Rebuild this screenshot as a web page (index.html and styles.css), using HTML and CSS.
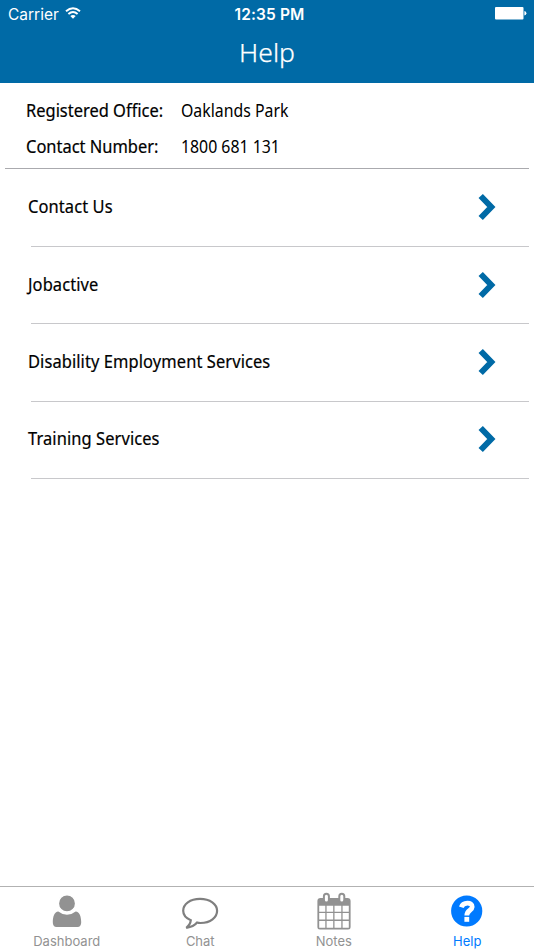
FILE: index.html
```html
<!DOCTYPE html>
<html lang="en">
  <head>
    <meta charset="utf-8" />
    <meta name="viewport" content="width=device-width, initial-scale=1.0" />
    <title>Help</title>
    <link rel="stylesheet" href="styles.css">
  </head>
  <body>
    <header class="header">
      <div class="status">
        <span class="status__carrier">
          <span class="status__name">Carrier</span>
          <svg class="status__wifi" viewBox="0 0 16 12">
            <path d="M1 4.2Q8-1.8 15 4.2M3.4 6.9Q8 3.1 12.6 6.9" />
            <path class="wifi__dot" d="M5.3 9Q8 6.9 10.7 9L8 11.7z" />
          </svg>
        </span>
        <span class="status__time">12:35 PM</span>
        <svg class="status__battery" viewBox="0 0 32 13">
          <rect width="28.5" height="12.4" rx="1" />
          <path d="M29.4 4Q31.4 4.4 31.4 6.2T29.4 8.4z" />
        </svg>
      </div>
      <h1>Help</h1>
    </header>
    <main>
      <dl class="info">
        <dt><span>Registered Office:</span></dt>
        <dd><span>Oaklands Park</span></dd>
        <dt><span>Contact Number:</span></dt>
        <dd><span>1800 681 131</span></dd>
      </dl>
      <ul class="menu">
        <li>
          <a href="#contact"><span>Contact Us</span>
            <svg viewBox="0 0 18 28"><path d="M2.7 3L13.3 14L2.7 25" /></svg>
          </a>
        </li>
        <li>
          <a href="#jobactive"><span>Jobactive</span>
            <svg viewBox="0 0 18 28"><path d="M2.7 3L13.3 14L2.7 25" /></svg>
          </a>
        </li>
        <li>
          <a href="#disability"><span>Disability Employment Services</span>
            <svg viewBox="0 0 18 28"><path d="M2.7 3L13.3 14L2.7 25" /></svg>
          </a>
        </li>
        <li>
          <a href="#training"><span>Training Services</span>
            <svg viewBox="0 0 18 28"><path d="M2.7 3L13.3 14L2.7 25" /></svg>
          </a>
        </li>
      </ul>
    </main>
    <nav class="tabs">
      <a href="#dashboard">
        <svg viewBox="0 0 40 40">
          <path class="fill" d="M11.3 20.5Q15.2 23.7 20 23.7T28.7 20.5C32.5 20.7 34.2 25.5 34.2 31.2Q34.2 36 30.5 36H9.5Q5.8 36 5.8 31.2C5.8 25.5 7.5 20.7 11.3 20.5z" />
          <circle class="fill head" cx="20" cy="12.4" r="8.6" />
        </svg>
        <span>Dashboard</span>
      </a>
      <a href="#chat">
        <svg viewBox="0 0 40 40">
          <path class="line" d="M20 7.9C10 7.9 3.2 13.3 3.2 19.8C3.2 24 6.1 27.3 10.8 29.2C10.5 32.3 9 34.7 6.3 36.8C11.3 36 14.7 34.4 17.1 31.5Q18.5 32 20.5 32C30.5 32 37.1 26.4 37.1 19.8C37.1 13.3 30 7.9 20 7.9z" />
        </svg>
        <span>Chat</span>
      </a>
      <a href="#notes">
        <svg viewBox="0 0 40 40">
          <path class="fill" fill-rule="evenodd" d="M6.5 7H33.5Q36.6 7 36.6 10V36Q36.6 38.5 34 38.5H6Q3.4 38.5 3.4 36V10Q3.4 7 6.5 7zM5.2 14.7V20.7H11.3V14.7zM12.6 14.7V20.7H19.2V14.7zM20.5 14.7V20.7H27.3V14.7zM28.6 14.7V20.7H34.8V14.7zM5.2 22V28.6H11.3V22zM12.6 22V28.6H19.2V22zM20.5 22V28.6H27.3V22zM28.6 22V28.6H34.8V22zM5.2 29.9V36.7H11.3V29.9zM12.6 29.9V36.7H19.2V29.9zM20.5 29.9V36.7H27.3V29.9zM28.6 29.9V36.7H34.8V29.9z" />
          <rect class="ring" x="9.9" y="2.8" width="5" height="8.8" rx="2.5" />
          <rect class="ring" x="25.3" y="2.8" width="5" height="8.8" rx="2.5" />
        </svg>
        <span>Notes</span>
      </a>
      <a class="tabs__active" href="#help">
        <svg viewBox="0 0 40 40">
          <circle class="fill" cx="19.7" cy="20" r="15.6" />
          <path class="mark" d="M14.3 16.3C16 11 25.3 10.8 25.2 15.9C25.1 19.4 19.8 19.3 19.8 24.4" />
          <path class="mark" d="M19.8 25.9V30.8" />
        </svg>
        <span>Help</span>
      </a>
    </nav>
  </body>
</html>
```

FILE: styles.css
```css
* {
  box-sizing: border-box;
}
body {
  display: flex;
  flex-direction: column;
  height: 950px;
  margin: 0;
  font-family: "Noto Sans", sans-serif;
  font-size: 17.5px;
  color: #000;
  background-color: #fff;
}
a {
  color: inherit;
  text-decoration: none;
}
.header {
  height: 83px;
  color: #fff;
  background-color: #006aa6;
}
.status {
  display: grid;
  grid-template-columns: 1fr auto 1fr;
  align-items: center;
  height: 28px;
  padding: 0 7px 0 8px;
  font-family: Inter, sans-serif;
  font-size: 15.5px;
}
.status__carrier {
  display: flex;
  align-items: center;
  gap: 6px;
}
.status__wifi {
  width: 16px;
  height: 12px;
  margin-bottom: 2px;
  fill: none;
  stroke: #fff;
  stroke-width: 2;
}
.wifi__dot {
  fill: #fff;
  stroke: none;
}
.status__time {
  margin-left: 4px;
  font-weight: 600;
  letter-spacing: 0.1px;
}
.status__battery {
  justify-self: end;
  width: 32px;
  height: 13px;
  margin-bottom: 1px;
  fill: #fff;
}
h1 {
  margin: 0;
  font-size: 26.5px;
  font-weight: 300;
  line-height: 48px;
  text-align: center;
  -webkit-text-stroke: 0.25px #fff;
}
main {
  flex: 1;
}
.info {
  display: grid;
  grid-template-columns: 155px 1fr;
  grid-auto-rows: 36px;
  align-items: center;
  height: 86px;
  margin: 0 5px;
  padding: 9px 0 0 21px;
  border-bottom: 1px solid #aaaaae;
  white-space: nowrap;
}
.info dd {
  margin: 0;
}
.info span,
.menu span {
  display: inline-block;
  transform: scaleX(0.94);
  transform-origin: left;
}
.info dt,
.menu span {
  -webkit-text-stroke: 0.2px #000;
}
.info dd span {
  transform: scaleX(0.905);
}
.menu {
  margin: 0 5px 0 31px;
  padding: 0;
  list-style: none;
}
.menu a {
  display: flex;
  align-items: center;
  justify-content: space-between;
  height: 75px;
  margin-left: -3px;
  padding-right: 33px;
}
.menu span {
  margin-top: -1px;
  letter-spacing: 0.1px;
}
.menu li {
  border-bottom: 1px solid #c8c8cb;
  height: 77.4px;
}
.menu li:first-child {
  height: 78px;
}
.menu li:not(:first-child) a {
  height: 74px;
}
.menu svg {
  width: 18px;
  height: 28px;
  margin-top: 1px;
  fill: none;
  stroke: #006aa6;
  stroke-width: 6;
}
.tabs {
  display: grid;
  grid-template-columns: repeat(4, 1fr);
  height: 64px;
  border-top: 1px solid #b2b2b2;
  font-family: Inter, sans-serif;
  font-size: 13px;
  color: #929292;
}
.tabs a {
  display: flex;
  flex-direction: column;
  align-items: center;
  padding-top: 4px;
  line-height: 20px;
}
.tabs svg {
  width: 40px;
  height: 40px;
}
.tabs .tabs__active {
  color: #007aff;
}
.fill {
  fill: currentColor;
}
.head {
  stroke: #fff;
  stroke-width: 1.4;
}
.line {
  fill: none;
  stroke: #7f7f7f;
  stroke-width: 2.2;
}
.ring {
  fill: #fff;
  stroke: currentColor;
  stroke-width: 2;
}
.mark {
  fill: none;
  stroke: #fff;
  stroke-width: 4.8;
}
```
